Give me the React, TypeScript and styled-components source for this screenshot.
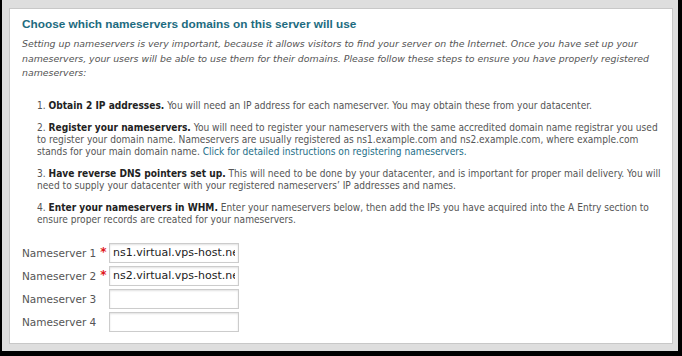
import styled, { createGlobalStyle } from 'styled-components'

const GlobalStyle = createGlobalStyle`
	html, body {
		margin: 0;
		padding: 0;
		background: #000000;
	}
	#root {
		width: 682px;
		height: 356px;
	}
`

const Frame = styled.div`
	box-sizing: border-box;
	width: 682px;
	height: 356px;
	border-left: 2px solid #000000;
	border-right: 4px solid #000000;
	border-bottom: 5px solid #000000;
	background: #dedede;
	padding: 8px 5px 7px 7px;
	display: flex;
`

const Panel = styled.div`
	box-sizing: border-box;
	flex: 1;
	background: #ffffff;
	border: 1px solid #c8c8c8;
	padding: 7px 8px 0 12px;
	display: flex;
	flex-direction: column;
`

const Title = styled.h2`
	margin: 0;
	font-family: 'Liberation Sans', Arial, sans-serif;
	font-size: 11.8px;
	font-weight: bold;
	color: #1d6b80;
	line-height: 16px;
`

const Intro = styled.p`
	margin: 5px 0 0 0;
	font-family: 'DejaVu Sans', Verdana, sans-serif;
	font-size: 9.4px;
	font-style: italic;
	color: #555555;
	line-height: 14.5px;
`

const Steps = styled.ol`
	margin: 19px 0 0 0;
	padding: 0 0 0 15px;
	list-style: none;
	display: flex;
	flex-direction: column;
	gap: 10px;
`

const Step = styled.li`
	font-family: 'DejaVu Sans Condensed', 'DejaVu Sans', sans-serif;
	font-size: 10.1px;
	color: #555555;
	line-height: 12px;
	b {
		color: #222222;
	}
	a {
		color: #1d6e88;
		text-decoration: none;
	}
`

const Form = styled.div`
	margin-top: 17px;
	display: flex;
	flex-direction: column;
	gap: 3px;
`

const Row = styled.div`
	display: flex;
	align-items: center;
	height: 20px;
`

const Label = styled.label`
	box-sizing: border-box;
	width: 87px;
	font-family: 'DejaVu Sans', Verdana, sans-serif;
	font-size: 10.5px;
	color: #555555;
	display: flex;
	align-items: center;
	gap: 4px;
`

const Star = styled.span<{ $show: boolean }>`
	color: #e0161b;
	font-size: 12px;
	font-weight: bold;
	visibility: ${(props) => (props.$show ? 'visible' : 'hidden')};
	margin-top: -2px;
`

const Field = styled.input`
	box-sizing: border-box;
	width: 130px;
	height: 20px;
	margin: 0;
	padding: 0 3px;
	border: 1px solid #cccccc;
	box-shadow: inset 0 1px 2px rgba(0, 0, 0, 0.12);
	font-family: 'DejaVu Sans', Verdana, sans-serif;
	font-size: 11px;
	color: #222222;
	outline: none;
`

const nameservers = [
	{ id: 1, value: 'ns1.virtual.vps-host.net', required: true },
	{ id: 2, value: 'ns2.virtual.vps-host.net', required: true },
	{ id: 3, value: '', required: false },
	{ id: 4, value: '', required: false },
]

export default function App() {
	return (
		<>
			<GlobalStyle />
			<Frame>
				<Panel>
					<Title>Choose which nameservers domains on this server will use</Title>
					<Intro>
						Setting up nameservers is very important, because it allows visitors to find your server on the Internet. Once you
						have set up your nameservers, your users will be able to use them for their domains. Please follow these steps to
						ensure you have properly registered nameservers:
					</Intro>
					<Steps>
						<Step>
							1. <b>Obtain 2 IP addresses.</b> You will need an IP address for each nameserver. You may obtain these from your
							datacenter.
						</Step>
						<Step>
							2. <b>Register your nameservers.</b> You will need to register your nameservers with the same accredited domain
							name registrar you used to register your domain name. Nameservers are usually registered as ns1.example.com and
							ns2.example.com, where example.com stands for your main domain name.{' '}
							<a href="#">Click for detailed instructions on registering nameservers.</a>
						</Step>
						<Step>
							3. <b>Have reverse DNS pointers set up.</b> This will need to be done by your datacenter, and is important for
							proper mail delivery. You will need to supply your datacenter with your registered nameservers&#8217; IP addresses
							and names.
						</Step>
						<Step>
							4. <b>Enter your nameservers in WHM.</b> Enter your nameservers below, then add the IPs you have acquired into the
							A Entry section to ensure proper records are created for your nameservers.
						</Step>
					</Steps>
					<Form>
						{nameservers.map((ns) => (
							<Row key={ns.id}>
								<Label htmlFor={'ns' + ns.id}>
									Nameserver {ns.id}
									<Star $show={ns.required}>*</Star>
								</Label>
								<Field id={'ns' + ns.id} defaultValue={ns.value} />
							</Row>
						))}
					</Form>
				</Panel>
			</Frame>
		</>
	)
}
